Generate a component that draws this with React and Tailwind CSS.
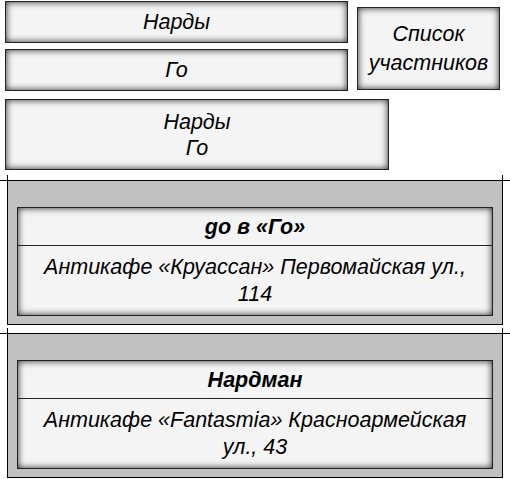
import React from 'react';

const box =
  'flex items-center justify-center text-center border border-[#222] bg-[#f4f4f4] shadow-[inset_0_0_7px_rgba(0,0,0,0.85)]';

const events = [
  { id: 1, title: 'go в «Го»', place: 'Антикафе «Круассан» Первомайская ул., 114' },
  { id: 2, title: 'Нардман', place: 'Антикафе «Fantasmia» Красноармейская ул., 43' },
];

const Section = ({ event, first }) => (
  <div className={`relative border-t border-black ${first ? 'mt-[10px]' : 'mt-[8px]'}`}>
    {/* corner ticks */}
    <div className="absolute left-[7px] -top-[6px] w-px h-[6px] bg-black" />
    <div className="absolute left-[502px] -top-[6px] w-px h-[6px] bg-black" />
    <div className="ml-[7px] w-[496px] border-x border-b border-black bg-[#c0c0c0] px-[9px] pt-[26px] pb-[8px]">
      <div className="border border-[#222] bg-[#f4f4f4] shadow-[inset_0_0_7px_rgba(0,0,0,0.85)]">
        <div className="h-[38px] flex items-center justify-center border-b border-[#222] font-bold italic">
          {event.title}
        </div>
        <div className="h-[69px] flex items-center justify-center text-center px-4 leading-[27px]">
          {event.place}
        </div>
      </div>
    </div>
  </div>
);

export default function App() {
  return (
    <div className="w-[510px] h-[479px] overflow-hidden bg-white text-black italic text-[21.5px] leading-[26px] font-['Liberation_Sans',Arial,sans-serif]">
      <div className="pl-[5px] pt-[1px]">
        <div className="flex items-start gap-[9px]">
          <div className="w-[343px] flex flex-col gap-[6px]">
            <div className={`${box} h-[42px]`}>Нарды</div>
            <div className={`${box} h-[42px]`}>Го</div>
          </div>
          <div className={`${box} mt-[6px] w-[143px] h-[83px] leading-[29px]`}>
            Список
            <br />
            участников
          </div>
        </div>
        <div className={`${box} mt-[8px] w-[384px] h-[71px]`}>
          Нарды
          <br />
          Го
        </div>
      </div>
      {events.map((e, i) => (
        <Section key={e.id} event={e} first={i === 0} />
      ))}
    </div>
  );
}
